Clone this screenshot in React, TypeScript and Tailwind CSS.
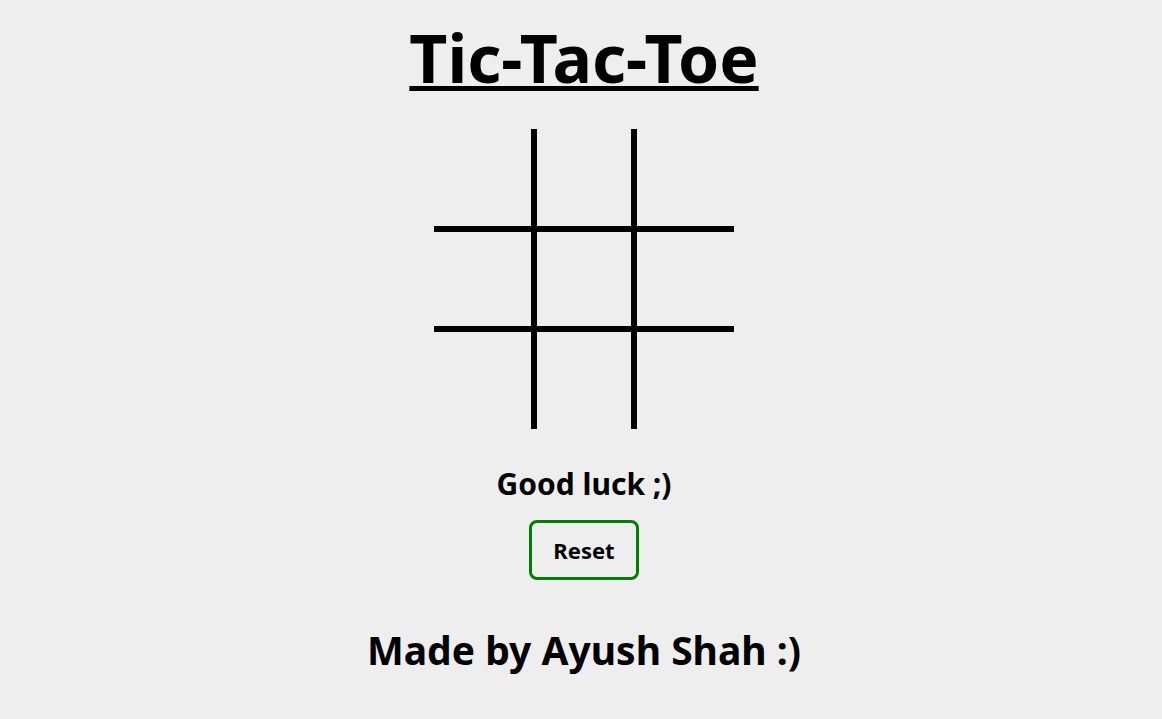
import React, { useState } from "react";

const font = { fontFamily: '"Noto Sans", "Open Sans", sans-serif' };

export default function App() {
  const [cells, setCells] = useState<string[]>(Array(9).fill(""));
  const [turn, setTurn] = useState("X");

  const borders = [
    "border-r-[3px] border-b-[3px]",
    "border-x-[3px] border-b-[3px]",
    "border-l-[3px] border-b-[3px]",
    "border-r-[3px] border-y-[3px]",
    "border-[3px]",
    "border-l-[3px] border-y-[3px]",
    "border-r-[3px] border-t-[3px]",
    "border-x-[3px] border-t-[3px]",
    "border-l-[3px] border-t-[3px]",
  ];

  const play = (i: number) => {
    if (cells[i]) return;
    const next = [...cells];
    next[i] = turn;
    setCells(next);
    setTurn(turn === "X" ? "O" : "X");
  };

  return (
    <div
      className="min-h-screen w-full bg-[#eeeeee] text-black flex flex-col items-center pl-[6px]"
      style={font}
    >
      <h1 className="mt-[12px] text-[66px] leading-[90px] font-bold underline decoration-[5px] underline-offset-[3px]">
        Tic-Tac-Toe
      </h1>
      <div className="mt-[27px] grid grid-cols-[100px_100px_100px]">
        {cells.map((c, i) => (
          <button
            key={i}
            onClick={() => play(i)}
            className={`h-[100px] w-[100px] border-black flex items-center justify-center text-5xl font-bold ${borders[i]}`}
          >
            {c}
          </button>
        ))}
      </div>
      <p className="mt-[35px] text-[30px] leading-[40px] font-bold">Good luck ;)</p>
      <button
        onClick={() => {
          setCells(Array(9).fill(""));
          setTurn("X");
        }}
        className="mt-[16px] h-[60px] w-[110px] rounded-[8px] border-[3px] border-[#008000] text-[22px] font-bold"
      >
        Reset
      </button>
      <p className="mt-[44px] text-[39px] leading-[52px] font-bold">Made by Ayush Shah :)</p>
    </div>
  );
}
